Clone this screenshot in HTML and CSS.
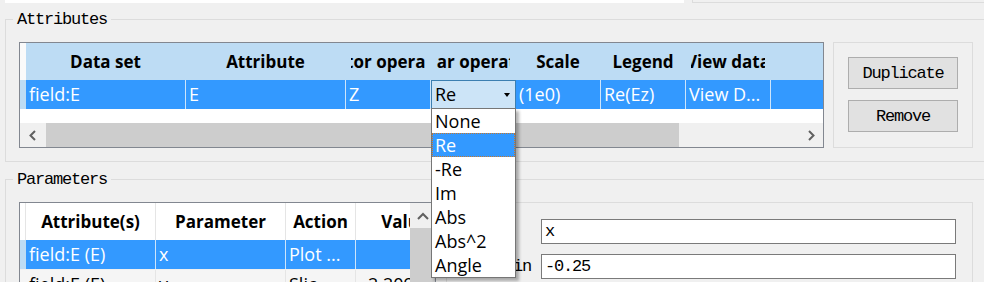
FILE: index.html
```html
<!DOCTYPE html>
<html lang="en">
<head>
    <meta charset="UTF-8">
    <meta name="viewport" content="width=device-width, initial-scale=1.0">
    <title>Plot attributes</title>
    <link rel="stylesheet" href="styles.css">
</head>
<body>
<div class="window">

    <!-- remains of the panel above -->
    <div class="top-strip">
        <div class="top-white"></div>
        <div class="top-box"></div>
    </div>

    <!-- Attributes -->
    <fieldset class="group attrs">
        <legend>Attributes</legend>
        <div class="group-row">
            <div class="table attr-table">
                <div class="attr-body">
                    <div class="row head">
                        <div class="vhead"></div>
                        <div class="cell hd w160"><div class="clip">Data set</div></div>
                        <div class="cell hd w160"><div class="clip">Attribute</div></div>
                        <div class="cell hd w85"><div class="clip">Vector operation</div></div>
                        <div class="cell hd w85"><div class="clip">Scalar operation</div></div>
                        <div class="cell hd w85"><div class="clip">Scale</div></div>
                        <div class="cell hd w85"><div class="clip">Legend</div></div>
                        <div class="cell hd w85"><div class="clip">View data</div></div>
                        <div class="cell filler"></div>
                    </div>
                    <div class="row data sel">
                        <div class="vhead"></div>
                        <div class="cell w160">field:E</div>
                        <div class="cell w160">E</div>
                        <div class="cell w85">Z</div>
                        <div class="cell w85 combo-cell">
                            <div class="combo">Re<span class="combo-arrow"></span></div>
                            <ul class="combo-popup">
                                <li>None</li>
                                <li class="current">Re</li>
                                <li>-Re</li>
                                <li>Im</li>
                                <li>Abs</li>
                                <li>Abs^2</li>
                                <li>Angle</li>
                            </ul>
                        </div>
                        <div class="cell w85">(1e0)</div>
                        <div class="cell w85">Re(Ez)</div>
                        <div class="cell w85">View D...</div>
                        <div class="cell filler"></div>
                    </div>
                </div>
                <div class="hscroll">
                    <div class="sb-btn left-btn">
                        <svg width="10" height="11" viewBox="0 0 10 11"><polyline points="7,1 2.5,5.5 7,10" fill="none" stroke="#606060" stroke-width="2"/></svg>
                    </div>
                    <div class="sb-thumb h-thumb"></div>
                    <div class="sb-track"></div>
                    <div class="sb-btn right-btn">
                        <svg width="10" height="11" viewBox="0 0 10 11"><polyline points="3,1 7.5,5.5 3,10" fill="none" stroke="#606060" stroke-width="2"/></svg>
                    </div>
                </div>
            </div>

            <div class="button-box">
                <button>Duplicate</button>
                <button>Remove</button>
            </div>
        </div>
    </fieldset>

    <!-- Parameters -->
    <fieldset class="group params">
        <legend>Parameters</legend>
        <div class="group-row">
            <div class="table param-table">
                <div class="param-view">
                    <div class="row head param-head">
                        <div class="vhead"></div>
                        <div class="cell hd w130"><div class="clip">Attribute(s)</div></div>
                        <div class="cell hd w130"><div class="clip">Parameter</div></div>
                        <div class="cell hd w70"><div class="clip">Action</div></div>
                        <div class="cell hd w99"><div class="clip">Value</div></div>
                    </div>
                    <div class="row data sel">
                        <div class="vhead"></div>
                        <div class="cell w130">field:E (E)</div>
                        <div class="cell w130">x</div>
                        <div class="cell w70">Plot ...</div>
                        <div class="cell w99"></div>
                    </div>
                    <div class="row data alt">
                        <div class="vhead"></div>
                        <div class="cell w130">field:E (E)</div>
                        <div class="cell w130">y</div>
                        <div class="cell w70">Slic...</div>
                        <div class="cell w99 value">2.2099</div>
                    </div>
                </div>
                <div class="vscroll">
                    <div class="sb-btn up-btn">
                        <svg width="12" height="8" viewBox="0 0 12 8"><polyline points="1,7 6,2 11,7" fill="none" stroke="#606060" stroke-width="2"/></svg>
                    </div>
                    <div class="sb-thumb v-thumb"></div>
                </div>
            </div>

            <div class="param-box">
                <label>Name</label>
                <input type="text" value="x">
                <label>Plot min</label>
                <input type="text" value="-0.25">
            </div>
        </div>
    </fieldset>

</div>
</body>
</html>
```

FILE: styles.css
```css
html, body {
    margin: 0;
    padding: 0;
    background-color: #f0f0f0;
    overflow: hidden;
}

body {
    font-family: "Open Sans", "Liberation Sans", sans-serif;
    font-size: 18px;
    color: #000;
}

.window {
    width: 992px;
    height: 282px;
    overflow: hidden;
}

/* top strip */
.top-strip {
    display: flex;
    height: 3px;
}

.top-white {
    width: 679px;
    margin-left: 5px;
    background-color: #fff;
}

.top-box {
    flex: 1;
    margin-left: 8px;
    border-left: 1px solid #dcdcdc;
    border-bottom: 1px solid #dcdcdc;
    height: 2px;
}

/* group boxes */
.group {
    margin: 0 5px;
    padding: 15px 13px 13px;
    border: 1px solid #dcdcdc;
    min-width: 0;
}

.group legend,
.param-box,
.button-box button {
    font-family: "Liberation Mono", monospace;
    font-size: 17px;
    letter-spacing: -1.2px;
}

.group legend {
    line-height: 15px;
    padding: 0 4px;
    margin-left: -6px;
}

.attrs {
    margin-top: 9px;
}

.params {
    margin-top: 10px;
}

.group-row {
    display: flex;
}

/* tables */
.table {
    box-sizing: border-box;
    border: 1px solid #828790;
    background-color: #fff;
}

.attr-table {
    width: 805px;
}

.attr-body {
    height: 80px;
}

.row {
    display: flex;
}

.head {
    height: 37px;
    font-weight: bold;
    font-size: 17px;
}

.attr-table .head {
    background-color: #bddcf4;
}

.attr-table .head .vhead {
    background-color: #fafafa;
}

.data {
    height: 29px;
    line-height: 29px;
}

.sel {
    background-color: #3399ff;
    color: #fff;
}

.alt {
    background-color: #f5f5f5;
    border-top: 1px solid #f0f0f0;
}

.vhead {
    width: 6px;
    flex: none;
}

.sel .vhead {
    background-color: #bddcf4;
}

.cell {
    box-sizing: border-box;
    flex: none;
    padding: 0 3px;
    white-space: nowrap;
    overflow: hidden;
    border-right: 1px solid #e5e5e5;
}

.sel .cell {
    border-right-color: #cde5fb;
}

.attr-table .head .cell {
    border-right-color: #bddcf4;
}

.cell.hd {
    display: flex;
    align-items: center;
    padding: 0 5px;
}

.clip {
    flex: 1;
    min-width: 0;
    overflow: hidden;
    display: flex;
    justify-content: center;
    white-space: nowrap;
}

.w160 { width: 160px; }
.w130 { width: 130px; }
.w99 { width: 99px; }
.w85 { width: 85px; }
.w70 { width: 70px; }

.filler {
    flex: 1;
    border-right: none;
}

.value {
    padding-left: 12px;
}

/* combo box with its open list */
.combo-cell {
    position: relative;
    padding: 0;
    overflow: visible;
    border-right: none;
}

.combo {
    box-sizing: border-box;
    height: 29px;
    line-height: 27px;
    border: 1px solid #3c7fb1;
    background-color: #cce4f7;
    color: #000;
    padding-left: 3px;
    display: flex;
    align-items: center;
}

.combo-arrow {
    margin-left: auto;
    margin-right: 5px;
    width: 0;
    height: 0;
    border-left: 3px solid transparent;
    border-right: 3px solid transparent;
    border-top: 4px solid #000;
}

.combo-popup {
    position: absolute;
    top: 28px;
    left: 0;
    z-index: 10;
    box-sizing: border-box;
    width: 85px;
    margin: 0;
    padding: 0;
    list-style-type: none;
    background-color: #fff;
    border: 1px solid #767676;
    box-shadow: 3px 3px 3px rgba(0, 0, 0, 0.3);
    color: #000;
}

.combo-popup li {
    box-sizing: border-box;
    height: 24px;
    line-height: 24px;
    padding-left: 3px;
}

.combo-popup li.current {
    background-color: #3399ff;
    color: #fff;
    border: 1px dotted #c8782c;
    line-height: 22px;
    padding-left: 2px;
}

/* scroll bars */
.hscroll {
    display: flex;
    height: 24px;
    background-color: #f0f0f0;
}

.sb-btn {
    display: flex;
    align-items: center;
    justify-content: center;
    background-color: #f0f0f0;
    flex: none;
}

.left-btn {
    width: 26px;
}

.right-btn {
    width: 25px;
}

.sb-thumb {
    background-color: #cdcdcd;
}

.h-thumb {
    width: 633px;
}

.sb-track {
    flex: 1;
}

.param-table {
    display: flex;
    width: 417px;
    height: 100px;
}

.param-view {
    width: 390px;
    overflow: hidden;
}

.param-head {
    background-color: #fff;
}

.param-head .vhead {
    border-right: 1px solid #e5e5e5;
    width: 5px;
}

.vscroll {
    width: 25px;
    display: flex;
    flex-direction: column;
    background-color: #f0f0f0;
}

.up-btn {
    height: 25px;
}

.v-thumb {
    flex: 1;
}

/* right hand boxes */
.button-box {
    box-sizing: border-box;
    width: 140px;
    margin-left: 9px;
    border: 1px solid #dcdcdc;
    padding: 14px 0 0 14px;
    display: flex;
    flex-direction: column;
    gap: 11px;
}

.button-box button {
    width: 110px;
    height: 32px;
    padding: 0;
    border: 1px solid #adadad;
    background-color: #e1e1e1;
    color: #000;
}

.param-box {
    flex: 1;
    margin-left: 10px;
    border: 1px solid #dcdcdc;
    padding: 16px 16px 16px 12px;
    display: grid;
    grid-template-columns: 72px 1fr;
    column-gap: 10px;
    row-gap: 10px;
    align-items: center;
    align-content: start;
}

.param-box input {
    box-sizing: border-box;
    width: 100%;
    height: 25px;
    border: 1px solid #7a7a7a;
    padding: 0 3px;
    font: inherit;
    letter-spacing: inherit;
    background-color: #fff;
}
```
